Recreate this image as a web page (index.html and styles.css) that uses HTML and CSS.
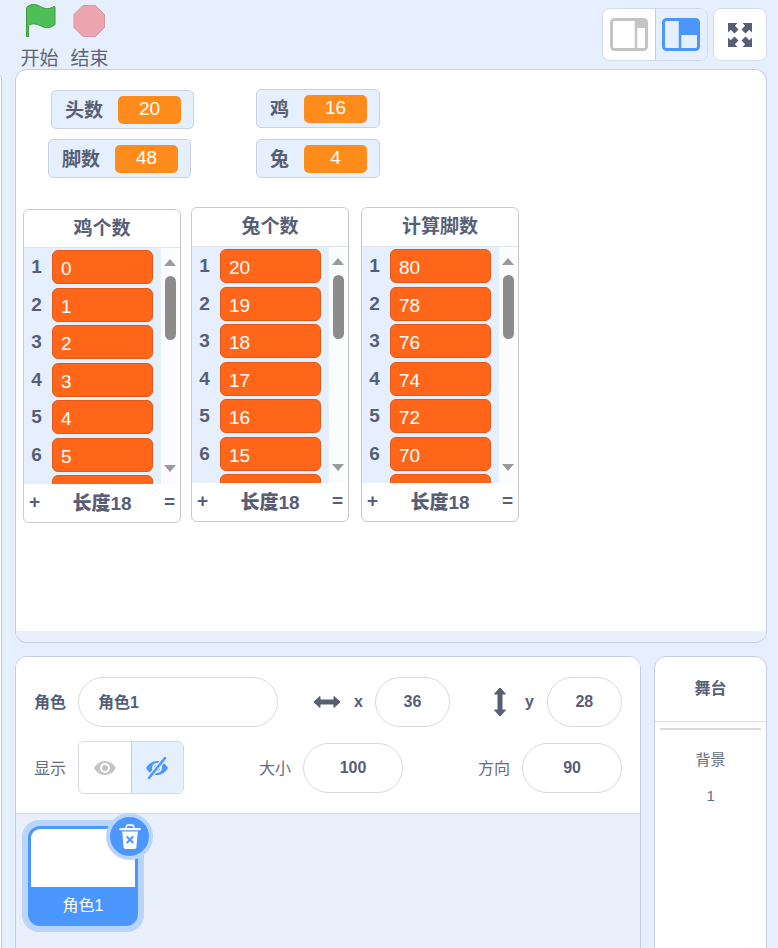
FILE: index.html
```html
<!DOCTYPE html>
<html lang="zh-CN">
<head>
  <meta charset="UTF-8" />
  <title>舞台</title>
  <link rel="stylesheet" href="styles.css">
</head>
<body>
  <!-- 顶部控制 -->
  <div class="topbar">
    <div class="controls">
      <div class="control">
        <svg width="36" height="38" viewBox="0 0 36 38"><path d="M5 6C10 2 14 3 19 6C24 8.500 28 8 32 5.500C32.500 5.200 33 5.500 33 6V23.500C28 27.500 24 27.500 19 25C14 22.500 10 22 6.500 24.500V35.500H4.500V6.500Z" fill="#4cbf56" stroke="#45993d" stroke-width="1"/></svg>
        <span>开始</span>
      </div>
      <div class="control">
        <svg width="36" height="38" viewBox="0 0 36 38"><path d="M11 4.500H23.500L32.500 13.500V26.500L23.500 35.500H11L2 26.500V13.500Z" fill="#eca4ae" stroke="#d9969f" stroke-width="1"/></svg>
        <span>结束</span>
      </div>
    </div>
    <div class="view-buttons">
      <div class="btn-group">
        <div class="view-btn">
          <svg width="38" height="33" viewBox="0 0 38 33"><rect x="1.500" y="1.500" width="35" height="30" rx="3" fill="#fff" stroke="#c4c4c4" stroke-width="3"/><rect x="26" y="1" width="11" height="9" fill="#c4c4c4"/><path d="M26 2V31" stroke="#c4c4c4" stroke-width="2.500"/></svg>
        </div>
        <div class="view-btn on">
          <svg width="38" height="33" viewBox="0 0 38 33"><rect x="1.500" y="1.500" width="35" height="30" rx="3" fill="#e6effd" stroke="#4c97ff" stroke-width="3"/><rect x="18" y="1" width="19" height="16" fill="#4c97ff"/><path d="M18 2V31" stroke="#4c97ff" stroke-width="2.500"/></svg>
        </div>
      </div>
      <div class="full-btn">
        <svg width="24" height="24" viewBox="0 0 24 24" fill="#575e75"><path d="M0 0H9.500L6.800 2.700L10.500 6.500L6.500 10.500L2.700 6.800L0 9.500Z"/><path d="M24 0H14.500L17.200 2.700L13.500 6.500L17.500 10.500L21.300 6.800L24 9.500Z"/><path d="M0 24H9.500L6.800 21.300L10.500 17.500L6.500 13.500L2.700 17.200L0 14.500Z"/><path d="M24 24H14.500L17.200 21.300L13.500 17.500L17.500 13.500L21.300 17.200L24 14.500Z"/></svg>
      </div>
    </div>
  </div>

  <div class="left-edge"></div>

  <!-- 舞台 -->
  <div class="stage">
    <div class="monitor mon-head"><b>头数</b><span class="value">20</span></div>
    <div class="monitor mon-foot"><b>脚数</b><span class="value">48</span></div>
    <div class="monitor mon-chick"><b>鸡</b><span class="value">16</span></div>
    <div class="monitor mon-rabbit"><b>兔</b><span class="value">4</span></div>

    <div class="list list-a">
      <div class="list-title">鸡个数</div>
      <div class="list-body">
        <div class="rows">
          <div class="row"><span class="idx">1</span><span class="cell">0</span></div>
          <div class="row"><span class="idx">2</span><span class="cell">1</span></div>
          <div class="row"><span class="idx">3</span><span class="cell">2</span></div>
          <div class="row"><span class="idx">4</span><span class="cell">3</span></div>
          <div class="row"><span class="idx">5</span><span class="cell">4</span></div>
          <div class="row"><span class="idx">6</span><span class="cell">5</span></div>
          <div class="row"><span class="idx"></span><span class="cell"></span></div>
        </div>
        <div class="scroll"><i class="up"></i><i class="thumb"></i><i class="down"></i></div>
      </div>
      <div class="list-foot"><span>+</span><b>长度18</b><span>=</span></div>
    </div>

    <div class="list list-b">
      <div class="list-title">兔个数</div>
      <div class="list-body">
        <div class="rows">
          <div class="row"><span class="idx">1</span><span class="cell">20</span></div>
          <div class="row"><span class="idx">2</span><span class="cell">19</span></div>
          <div class="row"><span class="idx">3</span><span class="cell">18</span></div>
          <div class="row"><span class="idx">4</span><span class="cell">17</span></div>
          <div class="row"><span class="idx">5</span><span class="cell">16</span></div>
          <div class="row"><span class="idx">6</span><span class="cell">15</span></div>
          <div class="row"><span class="idx"></span><span class="cell"></span></div>
        </div>
        <div class="scroll"><i class="up"></i><i class="thumb"></i><i class="down"></i></div>
      </div>
      <div class="list-foot"><span>+</span><b>长度18</b><span>=</span></div>
    </div>

    <div class="list list-c">
      <div class="list-title">计算脚数</div>
      <div class="list-body">
        <div class="rows">
          <div class="row"><span class="idx">1</span><span class="cell">80</span></div>
          <div class="row"><span class="idx">2</span><span class="cell">78</span></div>
          <div class="row"><span class="idx">3</span><span class="cell">76</span></div>
          <div class="row"><span class="idx">4</span><span class="cell">74</span></div>
          <div class="row"><span class="idx">5</span><span class="cell">72</span></div>
          <div class="row"><span class="idx">6</span><span class="cell">70</span></div>
          <div class="row"><span class="idx"></span><span class="cell"></span></div>
        </div>
        <div class="scroll"><i class="up"></i><i class="thumb"></i><i class="down"></i></div>
      </div>
      <div class="list-foot"><span>+</span><b>长度18</b><span>=</span></div>
    </div>
  </div>

  <!-- 角色区 -->
  <div class="bottom">
    <div class="sprite-panel">
      <div class="info">
        <div class="info-row">
          <span class="lbl strong">角色</span>
          <div class="pill name">角色1</div>
          <svg class="arrow-h" width="26" height="14" viewBox="0 0 26 14" fill="#575e75"><path d="M0 7L6 1.500V5H20V1.500L26 7L20 12.500V9H6V12.500Z" stroke="#575e75" stroke-linejoin="round"/></svg>
          <span class="axis axis-x">x</span>
          <div class="pill small">36</div>
          <svg class="arrow-v" width="14" height="28" viewBox="0 0 14 28" fill="#575e75"><path d="M7 0L12.500 6H9V22H12.500L7 28L1.500 22H5V6H1.500Z" stroke="#575e75" stroke-linejoin="round"/></svg>
          <span class="axis axis-y">y</span>
          <div class="pill small">28</div>
        </div>
        <div class="info-row">
          <span class="lbl">显示</span>
          <div class="show-group">
            <div class="show-btn">
              <svg width="24" height="16" viewBox="0 0 24 16"><path d="M1 8C4 3 8 1 12 1S20 3 23 8C20 13 16 15 12 15S4 13 1 8Z" fill="#c4c4c4"/><circle cx="12" cy="8" r="5" fill="#fff"/><circle cx="12" cy="8" r="3" fill="#c4c4c4"/></svg>
            </div>
            <div class="show-btn on">
              <svg width="24" height="22" viewBox="0 0 24 22"><path d="M1 11C4 6 8 4 12 4S20 6 23 11C20 16 16 18 12 18S4 16 1 11Z" fill="#4c97ff"/><circle cx="12" cy="11" r="5" fill="#e6effd"/><circle cx="12" cy="11" r="3" fill="#4c97ff"/><path d="M20 1L4 21" stroke="#e6effd" stroke-width="5"/><path d="M20 1L4 21" stroke="#4c97ff" stroke-width="2.500" stroke-linecap="round"/></svg>
            </div>
          </div>
          <span class="lbl size-lbl">大小</span>
          <div class="pill mid">100</div>
          <span class="lbl dir-lbl">方向</span>
          <div class="pill mid">90</div>
        </div>
      </div>
      <div class="sprite-list">
        <div class="sprite-card">
          <div class="sprite-inner">
            <div class="sprite-thumb"></div>
            <div class="sprite-name">角色1</div>
          </div>
          <div class="del">
            <svg width="22" height="26" viewBox="0 0 24 28"><path d="M8 4V2.500C8 1.700 8.700 1 9.500 1H14.500C15.300 1 16 1.700 16 2.500V4" fill="none" stroke="#fff" stroke-width="1.800"/><path d="M1.500 5.500H22.500" stroke="#fff" stroke-width="2.500" stroke-linecap="round"/><path d="M3.500 8H20.500L19 25C18.900 26 18.200 27 17 27H7C5.800 27 5.100 26 5 25Z" fill="#fff"/><path d="M9 14L15 20M15 14L9 20" stroke="#4c97ff" stroke-width="2.200" stroke-linecap="round"/></svg>
          </div>
        </div>
      </div>
    </div>
    <div class="stage-panel">
      <div class="stage-head">舞台</div>
      <div class="stage-rule"></div>
      <div class="stage-sub">背景</div>
      <div class="stage-num">1</div>
    </div>
  </div>
</body>
</html>
```

FILE: styles.css
```css
* {
  margin: 0;
  padding: 0;
  box-sizing: border-box;
}
html, body {
  height: 100%;
  overflow: hidden;
}
body {
  position: relative;
  padding: 0 11px 0 15px;
  background-color: #e6effd;
  color: #575e75;
  font-family: "Liberation Sans", "Noto Sans CJK SC", sans-serif;
}

/* top */
.topbar {
  height: 69px;
  display: flex;
  justify-content: space-between;
}
.controls {
  display: flex;
  gap: 13px;
  margin-left: 6px;
}
.control {
  width: 37px;
  display: flex;
  flex-direction: column;
  align-items: center;
  font-size: 19px;
  line-height: 24px;
  color: #5d6478;
}
.control span {
  white-space: nowrap;
}
.control svg {
  margin-top: 1px;
  margin-bottom: 8px;
  flex: none;
}
.view-buttons {
  display: flex;
  gap: 5px;
  padding-top: 8px;
}
.btn-group {
  display: flex;
  width: 106px;
  height: 53px;
  background-color: #fff;
  border: 1px solid #d4dbe8;
  border-radius: 8px;
  overflow: hidden;
}
.view-btn {
  flex: 1;
  display: flex;
  align-items: center;
  justify-content: center;
}
.view-btn.on {
  background-color: #e6effd;
  border-left: 1px solid #c4ccdb;
}
.full-btn {
  width: 54px;
  height: 53px;
  display: flex;
  align-items: center;
  justify-content: center;
  background-color: #fff;
  border: 1px solid #d4dbe8;
  border-radius: 8px;
}
.left-edge {
  position: absolute;
  left: -6px;
  top: 74px;
  width: 8px;
  height: 900px;
  border: 1px solid #c4ccdb;
  border-radius: 8px;
  background-color: #fff;
}

/* stage */
.stage {
  position: relative;
  height: 573px;
  background-color: #fff;
  border: 1px solid #c4cfe3;
  border-bottom-width: 11px;
  border-bottom-color: #e9f0fc;
  border-radius: 12px;
  box-shadow: 0 1px 0 #c4cfe3;
}
.monitor {
  position: absolute;
  height: 39px;
  display: flex;
  align-items: center;
  padding: 0 12px 0 13px;
  gap: 15px;
  background-color: #e6effd;
  border: 1px solid #c8d2e4;
  border-radius: 5px;
  font-size: 19px;
}
.monitor b {
  white-space: nowrap;
  margin-top: -2px;
}
.value {
  width: 63px;
  height: 28px;
  line-height: 26px;
  text-align: center;
  background-color: #ff8c1a;
  border-radius: 5px;
  color: #fff;
  font-size: 19px;
}
.mon-head { left: 35px; top: 20px; width: 143px; }
.mon-foot { left: 32px; top: 69px; width: 143px; }
.mon-chick { left: 240px; top: 19px; width: 124px; }
.mon-rabbit { left: 240px; top: 69px; width: 124px; }

/* lists */
.list {
  position: absolute;
  width: 158px;
  height: 314px;
  display: flex;
  flex-direction: column;
  background-color: #fff;
  border: 1px solid #c9c9c9;
  border-radius: 6px;
  overflow: hidden;
}
.list-a { left: 7px; top: 139px; }
.list-b { left: 175px; top: 137px; height: 315px; }
.list-c { left: 345px; top: 137px; height: 315px; }
.list-title {
  height: 38px;
  line-height: 37px;
  text-align: center;
  font-size: 19px;
  font-weight: bold;
  border-bottom: 1px solid #dfe3ea;
  flex: none;
}
.list-b .list-title, .list-c .list-title {
  height: 39px;
  line-height: 38px;
}
.list-body {
  flex: 1;
  display: flex;
  overflow: hidden;
}
.rows {
  width: 137px;
  background-color: #e6effd;
  padding-top: 2px;
  overflow: hidden;
}
.row {
  display: flex;
  align-items: flex-start;
  height: 37.500px;
}
.idx {
  width: 28px;
  padding-right: 3px;
  text-align: center;
  font-size: 19px;
  font-weight: bold;
  line-height: 33px;
  flex: none;
}
.cell {
  width: 101px;
  height: 34px;
  line-height: 36px;
  padding-left: 8px;
  background-color: #ff661a;
  border: 1px solid #e0591a;
  border-radius: 6px;
  color: #fff;
  font-size: 19px;
}
.scroll {
  position: relative;
  flex: 1;
  background-color: #fbfcfe;
}
.scroll i {
  position: absolute;
  display: block;
}
.up {
  left: 3px;
  top: 11px;
  border-left: 6px solid transparent;
  border-right: 6px solid transparent;
  border-bottom: 7px solid #9a9a9a;
}
.down {
  left: 3px;
  bottom: 12px;
  border-left: 6px solid transparent;
  border-right: 6px solid transparent;
  border-top: 7px solid #9a9a9a;
}
.thumb {
  left: 4px;
  top: 28px;
  width: 11px;
  height: 64px;
  background-color: #8c8c8c;
  border-radius: 6px;
}
.list-foot {
  height: 38px;
  flex: none;
  display: flex;
  align-items: center;
  justify-content: space-between;
  padding: 0 5px 3px 5px;
  font-size: 19px;
  font-weight: bold;
}

/* bottom */
.bottom {
  display: flex;
  gap: 13px;
  margin-top: 14px;
}
.sprite-panel {
  width: 627px;
  height: 320px;
  background-color: #e9f0fc;
  border: 1px solid #c4cfe3;
  border-radius: 12px 12px 0 0;
  overflow: hidden;
}
.info {
  height: 157px;
  padding: 20px 18px 0 18px;
  background-color: #fff;
  border-bottom: 1px solid #d6dbe6;
  display: flex;
  flex-direction: column;
  gap: 16px;
}
.info-row {
  display: flex;
  align-items: center;
  height: 50px;
}
.lbl {
  font-size: 16px;
  white-space: nowrap;
  color: #666c80;
  margin-bottom: 3px;
}
.lbl.strong {
  font-weight: bold;
  color: #575e75;
}
.pill {
  height: 50px;
  line-height: 47px;
  background-color: #fff;
  border: 1px solid #d9d9d9;
  border-radius: 25px;
  text-align: center;
  font-size: 16px;
  font-weight: bold;
  flex: none;
}
.pill.name {
  width: 200px;
  margin-left: 12px;
  padding-left: 19px;
  line-height: 49px;
  text-align: left;
}
.pill.small {
  width: 75px;
}
.pill.mid {
  width: 100px;
}
.arrow-h {
  margin-left: 36px;
}
.arrow-v {
  margin-left: 43px;
}
.axis {
  font-size: 16px;
  font-weight: bold;
}
.axis-x {
  margin: 0 12px 0 14px;
}
.axis-y {
  margin: 0 13px 0 18px;
}
.show-group {
  display: flex;
  width: 106px;
  height: 53px;
  margin: -1px 0 0 12px;
  border: 1px solid #d4d9e3;
  border-radius: 6px;
  overflow: hidden;
  flex: none;
}
.show-btn {
  flex: 1;
  display: flex;
  align-items: center;
  justify-content: center;
}
.show-btn.on {
  background-color: #e6effd;
  border-left: 1px solid #c4ccdb;
}
.size-lbl {
  margin-left: 75px;
  margin-right: 12px;
}
.dir-lbl {
  margin-left: 75px;
  margin-right: 12px;
}
.sprite-list {
  position: relative;
  padding: 6px 0 0 6px;
}
.sprite-card {
  position: relative;
  width: 122px;
  height: 112px;
  padding: 6px;
  background-color: #b8d5fd;
  border-radius: 17px;
}
.sprite-inner {
  height: 100px;
  border: 3px solid #4c97ff;
  border-radius: 12px;
  overflow: hidden;
  background-color: #4c97ff;
}
.sprite-thumb {
  height: 58px;
  background-color: #fff;
}
.sprite-name {
  height: 36px;
  line-height: 37px;
  text-align: center;
  color: #fff;
  font-size: 16px;
}
.del {
  position: absolute;
  right: -9px;
  top: -7px;
  width: 47px;
  height: 47px;
  display: flex;
  align-items: center;
  justify-content: center;
  background-color: #4c97ff;
  border: 4px solid #b8d5fd;
  border-radius: 50%;
}
.stage-panel {
  width: 113px;
  height: 320px;
  background-color: #fff;
  border: 1px solid #c4cfe3;
  border-radius: 12px 12px 0 0;
  text-align: center;
  font-size: 15px;
}
.stage-head {
  height: 65px;
  line-height: 63px;
  font-size: 16px;
  font-weight: bold;
  border-bottom: 1px solid #d9dde6;
}
.stage-rule {
  height: 2px;
  margin: 6px 5px 0;
  background-color: #d9d9d9;
}
.stage-sub {
  margin-top: 19px;
  line-height: 22px;
  color: #666c80;
}
.stage-num {
  margin-top: 14px;
  line-height: 22px;
  color: #666c80;
}
```
